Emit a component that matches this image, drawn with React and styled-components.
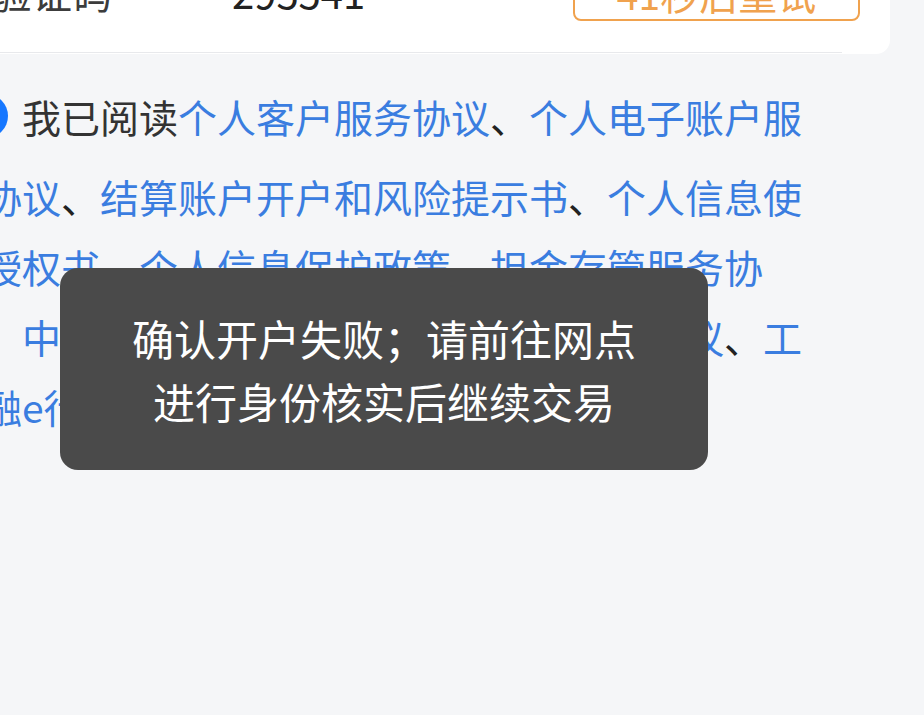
import React from "react";
import styled, { createGlobalStyle } from "styled-components";

const GlobalStyle = createGlobalStyle`
  html, body {
    margin: 0;
    padding: 0;
    background: #f5f6f8;
    overflow: hidden;
  }
  body {
    font-family: "Noto Sans CJK SC", "Noto Sans", sans-serif;
  }
`;

const Screen = styled.div`
  position: relative;
  width: 1000px;
  height: 783px;
  margin: -68px 0 0 -48px;
  background: #f5f6f8;
  overflow: hidden;
`;

const Card = styled.section`
  width: 938px;
  background: #ffffff;
  border-radius: 0 0 14px 0;
  padding-bottom: 1px;
`;

const Row = styled.div`
  display: flex;
  align-items: center;
  height: 120px;
  padding-left: 40px;
`;

const Label = styled.span`
  width: 240px;
  font-size: 40px;
  color: #3c3c3c;
`;

const Value = styled.span`
  flex: 1;
  font-size: 40px;
  color: #222222;
`;

const RetryButton = styled.button`
  box-sizing: border-box;
  width: 287px;
  height: 56px;
  margin-top: 2px;
  margin-right: 30px;
  border: 2px solid #f0a24e;
  border-radius: 8px;
  background: transparent;
  color: #f0a24e;
  font-family: inherit;
  font-size: 39px;
  line-height: 1;
  padding: 0;
`;

const Divider = styled.div`
  height: 1px;
  margin-right: 48px;
  background: #e8e9ec;
`;

const Agreement = styled.div`
  margin-top: 27px;
  padding-left: 31px;
  font-size: 39px;
  line-height: 70px;
`;

const Line = styled.div`
  white-space: nowrap;
  display: ${(p) => (p.$first ? "flex" : "block")};
  align-items: center;
  margin-bottom: ${(p) => (p.$first ? "10px" : "0")};
`;

const Check = styled.span`
  flex-shrink: 0;
  display: inline-flex;
  align-items: center;
  justify-content: center;
  width: 44px;
  height: 44px;
  margin-left: -19px;
  margin-right: 14px;
  border-radius: 50%;
  background: #1677ff;
`;

const Plain = styled.span`
  color: #333333;
`;

const Sep = styled.span`
  color: #222222;
`;

const Link = styled.span`
  color: #3a7de0;
`;

const Toast = styled.div`
  position: absolute;
  left: 108px;
  top: 336px;
  box-sizing: border-box;
  width: 648px;
  height: 202px;
  padding: 38px 60px;
  border-radius: 18px;
  background: #4a4a4a;
  color: #ffffff;
  font-size: 42px;
  line-height: 63px;
  text-align: center;
`;

export default function App() {
  return (
    <>
      <GlobalStyle />
      <Screen>
        <Card>
          <Row>
            <Label>验证码</Label>
            <Value>295541</Value>
            <RetryButton>41秒后重试</RetryButton>
          </Row>
          <Divider />
        </Card>

        <Agreement>
          <Line $first>
            <Check>
              <svg width="26" height="26" viewBox="0 0 24 24" fill="none">
                <path d="M5 12.5l4.5 4.5L19 7.5" stroke="#fff" strokeWidth="2.6" strokeLinecap="round" strokeLinejoin="round" />
              </svg>
            </Check>
            <span>
              <Plain>我已阅读</Plain>
              <Link>个人客户服务协议</Link>
              <Sep>、</Sep>
              <Link>个人电子账户服</Link>
            </span>
          </Line>
          <Line>
            <Link>协议</Link>
            <Sep>、</Sep>
            <Link>结算账户开户和风险提示书</Link>
            <Sep>、</Sep>
            <Link>个人信息使</Link>
          </Line>
          <Line>
            <Link>授权书</Link>
            <Sep>、</Sep>
            <Link>个人信息保护政策</Link>
            <Sep>、</Sep>
            <Link>担金存管服务协</Link>
          </Line>
          <Line>
            <Sep>、</Sep>
            <Link>中国工商银行电子银行个人客户服务协议</Link>
            <Sep>、</Sep>
            <Link>工</Link>
          </Line>
          <Line>
            <Link>融e行用户服务协议</Link>
          </Line>
        </Agreement>

        <Toast>确认开户失败；请前往网点进行身份核实后继续交易</Toast>
      </Screen>
    </>
  );
}
